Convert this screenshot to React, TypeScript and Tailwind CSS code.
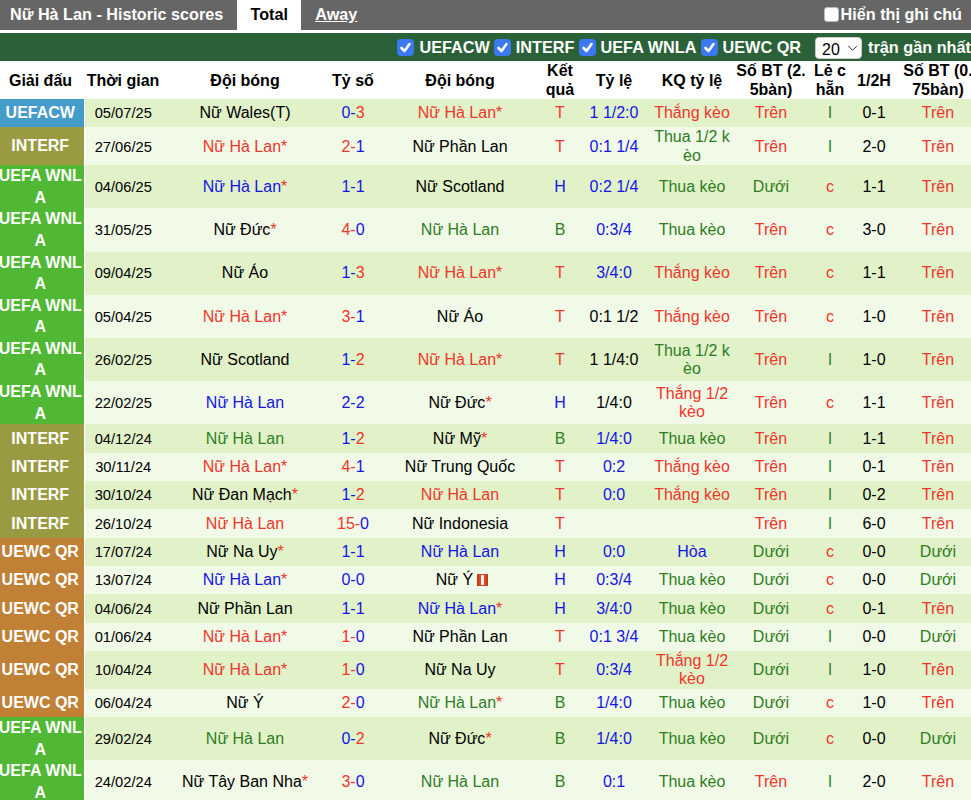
const RED = 'text-[#f0352b]';
const BLUE = 'text-[#1414e6]';
const GREEN = 'text-[#2f7d1f]';

const leagueBg: Record<string, string> = {
  UEFACW: 'bg-[#459bc9]',
  INTERF: 'bg-[#999a42]',
  'UEFA WNL A': 'bg-[#50b835]',
  'UEWC QR': 'bg-[#c08137]',
};

const resultColor: Record<string, string> = { T: RED, H: BLUE, B: GREEN };

type Match = {
  league: string;
  date: string;
  home: string;
  score: [string, string];
  away: string;
  result: string;
  odds: string;
  oddsBlack?: boolean;
  oddsResult: string;
  over: string;
  oddEven: string;
  half: string;
  over75: string;
  card?: boolean;
};

const matches: Match[] = [
  { league: 'UEFACW', date: '05/07/25', home: 'Nữ Wales(T)', score: ['0', '3'], away: 'Nữ Hà Lan*', result: 'T', odds: '1 1/2:0', oddsResult: 'Thắng kèo', over: 'Trên', oddEven: 'l', half: '0-1', over75: 'Trên' },
  { league: 'INTERF', date: '27/06/25', home: 'Nữ Hà Lan*', score: ['2', '1'], away: 'Nữ Phần Lan', result: 'T', odds: '0:1 1/4', oddsResult: 'Thua 1/2 kèo', over: 'Trên', oddEven: 'l', half: '2-0', over75: 'Trên' },
  { league: 'UEFA WNL A', date: '04/06/25', home: 'Nữ Hà Lan*', score: ['1', '1'], away: 'Nữ Scotland', result: 'H', odds: '0:2 1/4', oddsResult: 'Thua kèo', over: 'Dưới', oddEven: 'c', half: '1-1', over75: 'Trên' },
  { league: 'UEFA WNL A', date: '31/05/25', home: 'Nữ Đức*', score: ['4', '0'], away: 'Nữ Hà Lan', result: 'B', odds: '0:3/4', oddsResult: 'Thua kèo', over: 'Trên', oddEven: 'c', half: '3-0', over75: 'Trên' },
  { league: 'UEFA WNL A', date: '09/04/25', home: 'Nữ Áo', score: ['1', '3'], away: 'Nữ Hà Lan*', result: 'T', odds: '3/4:0', oddsResult: 'Thắng kèo', over: 'Trên', oddEven: 'c', half: '1-1', over75: 'Trên' },
  { league: 'UEFA WNL A', date: '05/04/25', home: 'Nữ Hà Lan*', score: ['3', '1'], away: 'Nữ Áo', result: 'T', odds: '0:1 1/2', oddsBlack: true, oddsResult: 'Thắng kèo', over: 'Trên', oddEven: 'c', half: '1-0', over75: 'Trên' },
  { league: 'UEFA WNL A', date: '26/02/25', home: 'Nữ Scotland', score: ['1', '2'], away: 'Nữ Hà Lan*', result: 'T', odds: '1 1/4:0', oddsBlack: true, oddsResult: 'Thua 1/2 kèo', over: 'Trên', oddEven: 'l', half: '1-0', over75: 'Trên' },
  { league: 'UEFA WNL A', date: '22/02/25', home: 'Nữ Hà Lan', score: ['2', '2'], away: 'Nữ Đức*', result: 'H', odds: '1/4:0', oddsBlack: true, oddsResult: 'Thắng 1/2 kèo', over: 'Trên', oddEven: 'c', half: '1-1', over75: 'Trên' },
  { league: 'INTERF', date: '04/12/24', home: 'Nữ Hà Lan', score: ['1', '2'], away: 'Nữ Mỹ*', result: 'B', odds: '1/4:0', oddsResult: 'Thua kèo', over: 'Trên', oddEven: 'l', half: '1-1', over75: 'Trên' },
  { league: 'INTERF', date: '30/11/24', home: 'Nữ Hà Lan*', score: ['4', '1'], away: 'Nữ Trung Quốc', result: 'T', odds: '0:2', oddsResult: 'Thắng kèo', over: 'Trên', oddEven: 'l', half: '0-1', over75: 'Trên' },
  { league: 'INTERF', date: '30/10/24', home: 'Nữ Đan Mạch*', score: ['1', '2'], away: 'Nữ Hà Lan', result: 'T', odds: '0:0', oddsResult: 'Thắng kèo', over: 'Trên', oddEven: 'l', half: '0-2', over75: 'Trên' },
  { league: 'INTERF', date: '26/10/24', home: 'Nữ Hà Lan', score: ['15', '0'], away: 'Nữ Indonesia', result: 'T', odds: '', oddsResult: '', over: 'Trên', oddEven: 'l', half: '6-0', over75: 'Trên' },
  { league: 'UEWC QR', date: '17/07/24', home: 'Nữ Na Uy*', score: ['1', '1'], away: 'Nữ Hà Lan', result: 'H', odds: '0:0', oddsResult: 'Hòa', over: 'Dưới', oddEven: 'c', half: '0-0', over75: 'Dưới' },
  { league: 'UEWC QR', date: '13/07/24', home: 'Nữ Hà Lan*', score: ['0', '0'], away: 'Nữ Ý', card: true, result: 'H', odds: '0:3/4', oddsResult: 'Thua kèo', over: 'Dưới', oddEven: 'c', half: '0-0', over75: 'Dưới' },
  { league: 'UEWC QR', date: '04/06/24', home: 'Nữ Phần Lan', score: ['1', '1'], away: 'Nữ Hà Lan*', result: 'H', odds: '3/4:0', oddsResult: 'Thua kèo', over: 'Dưới', oddEven: 'c', half: '0-1', over75: 'Trên' },
  { league: 'UEWC QR', date: '01/06/24', home: 'Nữ Hà Lan*', score: ['1', '0'], away: 'Nữ Phần Lan', result: 'T', odds: '0:1 3/4', oddsResult: 'Thua kèo', over: 'Dưới', oddEven: 'l', half: '0-0', over75: 'Dưới' },
  { league: 'UEWC QR', date: '10/04/24', home: 'Nữ Hà Lan*', score: ['1', '0'], away: 'Nữ Na Uy', result: 'T', odds: '0:3/4', oddsResult: 'Thắng 1/2 kèo', over: 'Dưới', oddEven: 'l', half: '1-0', over75: 'Trên' },
  { league: 'UEWC QR', date: '06/04/24', home: 'Nữ Ý', score: ['2', '0'], away: 'Nữ Hà Lan*', result: 'B', odds: '1/4:0', oddsResult: 'Thua kèo', over: 'Dưới', oddEven: 'c', half: '1-0', over75: 'Trên' },
  { league: 'UEFA WNL A', date: '29/02/24', home: 'Nữ Hà Lan', score: ['0', '2'], away: 'Nữ Đức*', result: 'B', odds: '1/4:0', oddsResult: 'Thua kèo', over: 'Dưới', oddEven: 'c', half: '0-0', over75: 'Dưới' },
  { league: 'UEFA WNL A', date: '24/02/24', home: 'Nữ Tây Ban Nha*', score: ['3', '0'], away: 'Nữ Hà Lan', result: 'B', odds: '0:1', oddsResult: 'Thua kèo', over: 'Trên', oddEven: 'l', half: '2-0', over75: 'Trên' },
];

const headers = ['Giải đấu', 'Thời gian', 'Đội bóng', 'Tỷ số', 'Đội bóng', 'Kết quả', 'Tỷ lệ', 'KQ tỷ lệ', 'Số BT (2.5bàn)', 'Lẻ chẵn', '1/2H', 'Số BT (0.75bàn)'];

const headerPad: Record<number, string> = { 0: 'pr-[3px]', 9: 'px-[3px]', 11: 'px-[3px]' };

const filters = ['UEFACW', 'INTERF', 'UEFA WNLA', 'UEWC QR'];

function Filter({ label }: { label: string }) {
  return (
    <label className="flex items-center gap-[5px]">
      <span className="relative flex size-[17px]">
        <input type="checkbox" defaultChecked className="size-[17px] appearance-none rounded-[4px] bg-[#3b78f2]" />
        <svg viewBox="0 0 17 17" className="absolute inset-0 size-[17px]" fill="none" stroke="white" strokeWidth="2.6" strokeLinecap="round" strokeLinejoin="round">
          <path d="M4.5 9l3 3 5-7" />
        </svg>
      </span>
      {label}
    </label>
  );
}

function Team({ name, result, card }: { name: string; result: string; card?: boolean }) {
  const star = name.endsWith('*');
  const color = name.includes('Hà Lan') ? resultColor[result] : 'text-black';
  return (
    <td className={`pt-[1px] ${color} ${card ? 'pl-[4px]' : ''}`}>
      {star ? name.slice(0, -1) : name}
      {star && <span className={RED}>*</span>}
      {card && (
        <svg viewBox="0 0 11 12" className="ml-[4px] inline-block h-[12px] w-[11px] align-[-1px]">
          <rect width="11" height="12" fill="#e0491f" />
          <rect width="2" height="12" fill="#c93a1c" />
          <rect x="9" width="2" height="12" fill="#c93a1c" />
          <rect x="4" y="1" width="3" height="10" fill="#fdf3ea" />
        </svg>
      )}
    </td>
  );
}

export default function App() {
  return (
    <div className="h-screen w-full overflow-hidden bg-white font-['Liberation_Sans',Arial,sans-serif] text-base text-black">
      {/* Title bar with tabs */}
      <div className="flex h-[30px] items-stretch bg-[#666666] text-[16.2px] font-bold text-white">
        <div className="flex items-center pb-[1px] pl-[10px] pr-[14px]">Nữ Hà Lan - Historic scores</div>
        <div className="flex w-[64px] items-center justify-center bg-white pb-[1px] text-black">Total</div>
        <div className="flex items-center pb-[1px] pl-[14px] underline">Away</div>
        <label className="ml-auto flex items-center gap-[2px] pb-[1px] pr-[9px]">
          <input type="checkbox" className="size-[15px] appearance-none rounded-[3px] border border-[#bbbbbb] bg-white" />
          Hiển thị ghi chú
        </label>
      </div>

      {/* Filter bar */}
      <div className="mt-[3px] flex h-[28px] items-center justify-end gap-[4px] whitespace-nowrap bg-[#2b6138] pt-[1px] text-[16.25px] font-bold text-white">
        {filters.map((f) => (
          <Filter key={f} label={f} />
        ))}
        <div className="relative ml-[10px] mr-[2px] flex">
          <select defaultValue="20" className="h-[22px] w-[47px] appearance-none rounded-[4px] border border-[#cccccc] bg-white pl-[6px] text-base font-normal text-black">
            <option>10</option>
            <option>20</option>
          </select>
          <svg viewBox="0 0 12 8" className="pointer-events-none absolute right-[4px] top-[8px] h-[7px] w-[11px]" fill="none" stroke="#222" strokeWidth="1.1">
            <path d="M1 1l5 5 5-5" />
          </svg>
        </div>
        <span>trận gần nhất</span>
      </div>

      {/* Results table */}
      <table className="w-[980px] table-fixed text-center leading-[18.4px]">
        <colgroup>
          <col className="w-[84px]" />
          <col className="w-[78px]" />
          <col className="w-[166px]" />
          <col className="w-[50px]" />
          <col className="w-[164px]" />
          <col className="w-[36px]" />
          <col className="w-[72px]" />
          <col className="w-[84px]" />
          <col className="w-[74px]" />
          <col className="w-[44px]" />
          <col className="w-[44px]" />
          <col className="w-[84px]" />
        </colgroup>
        <thead>
          <tr className="h-[38px] font-bold leading-[19px]">
            {headers.map((h, i) => (
              <th key={i} className={`break-all py-0 font-bold ${headerPad[i] ?? 'px-0'}`}>
                {h}
              </th>
            ))}
          </tr>
        </thead>
        <tbody>
          {matches.map((m, i) => {
            const homeWin = Number(m.score[0]) > Number(m.score[1]);
            const awayWin = Number(m.score[1]) > Number(m.score[0]);
            return (
              <tr key={m.date} className={`h-[28.33px] break-all ${i % 2 === 0 ? 'bg-[#e1f2c9]' : 'bg-[#f1f9e7]'}`}>
                <td className={`break-normal border-r border-white pr-[3px] font-bold leading-[21.6px] text-white ${leagueBg[m.league]}`}>
                  <div className="-mx-1">{m.league}</div>
                </td>
                <td className="pt-[1px] text-[14.7px]">{m.date}</td>
                <Team name={m.home} result={m.result} />
                <td className="pt-[1px]">
                  <span className={homeWin ? RED : BLUE}>{m.score[0]}-</span>
                  <span className={awayWin ? RED : BLUE}>{m.score[1]}</span>
                </td>
                <Team name={m.away} result={m.result} card={m.card} />
                <td className={`pt-[1px] ${resultColor[m.result]}`}>{m.result}</td>
                <td className={`pt-[1px] ${m.oddsBlack ? 'text-black' : BLUE}`}>{m.odds}</td>
                <td className={`pt-[1px] ${m.oddsResult.startsWith('Thắng') ? RED : m.oddsResult === 'Hòa' ? BLUE : GREEN}`}>{m.oddsResult}</td>
                <td className={`pt-[1px] ${m.over === 'Trên' ? RED : GREEN}`}>{m.over}</td>
                <td className={`pt-[1px] ${m.oddEven === 'c' ? RED : GREEN}`}>{m.oddEven}</td>
                <td className="pt-[1px]">{m.half}</td>
                <td className={`pt-[1px] ${m.over75 === 'Trên' ? RED : GREEN}`}>{m.over75}</td>
              </tr>
            );
          })}
        </tbody>
      </table>
    </div>
  );
}
